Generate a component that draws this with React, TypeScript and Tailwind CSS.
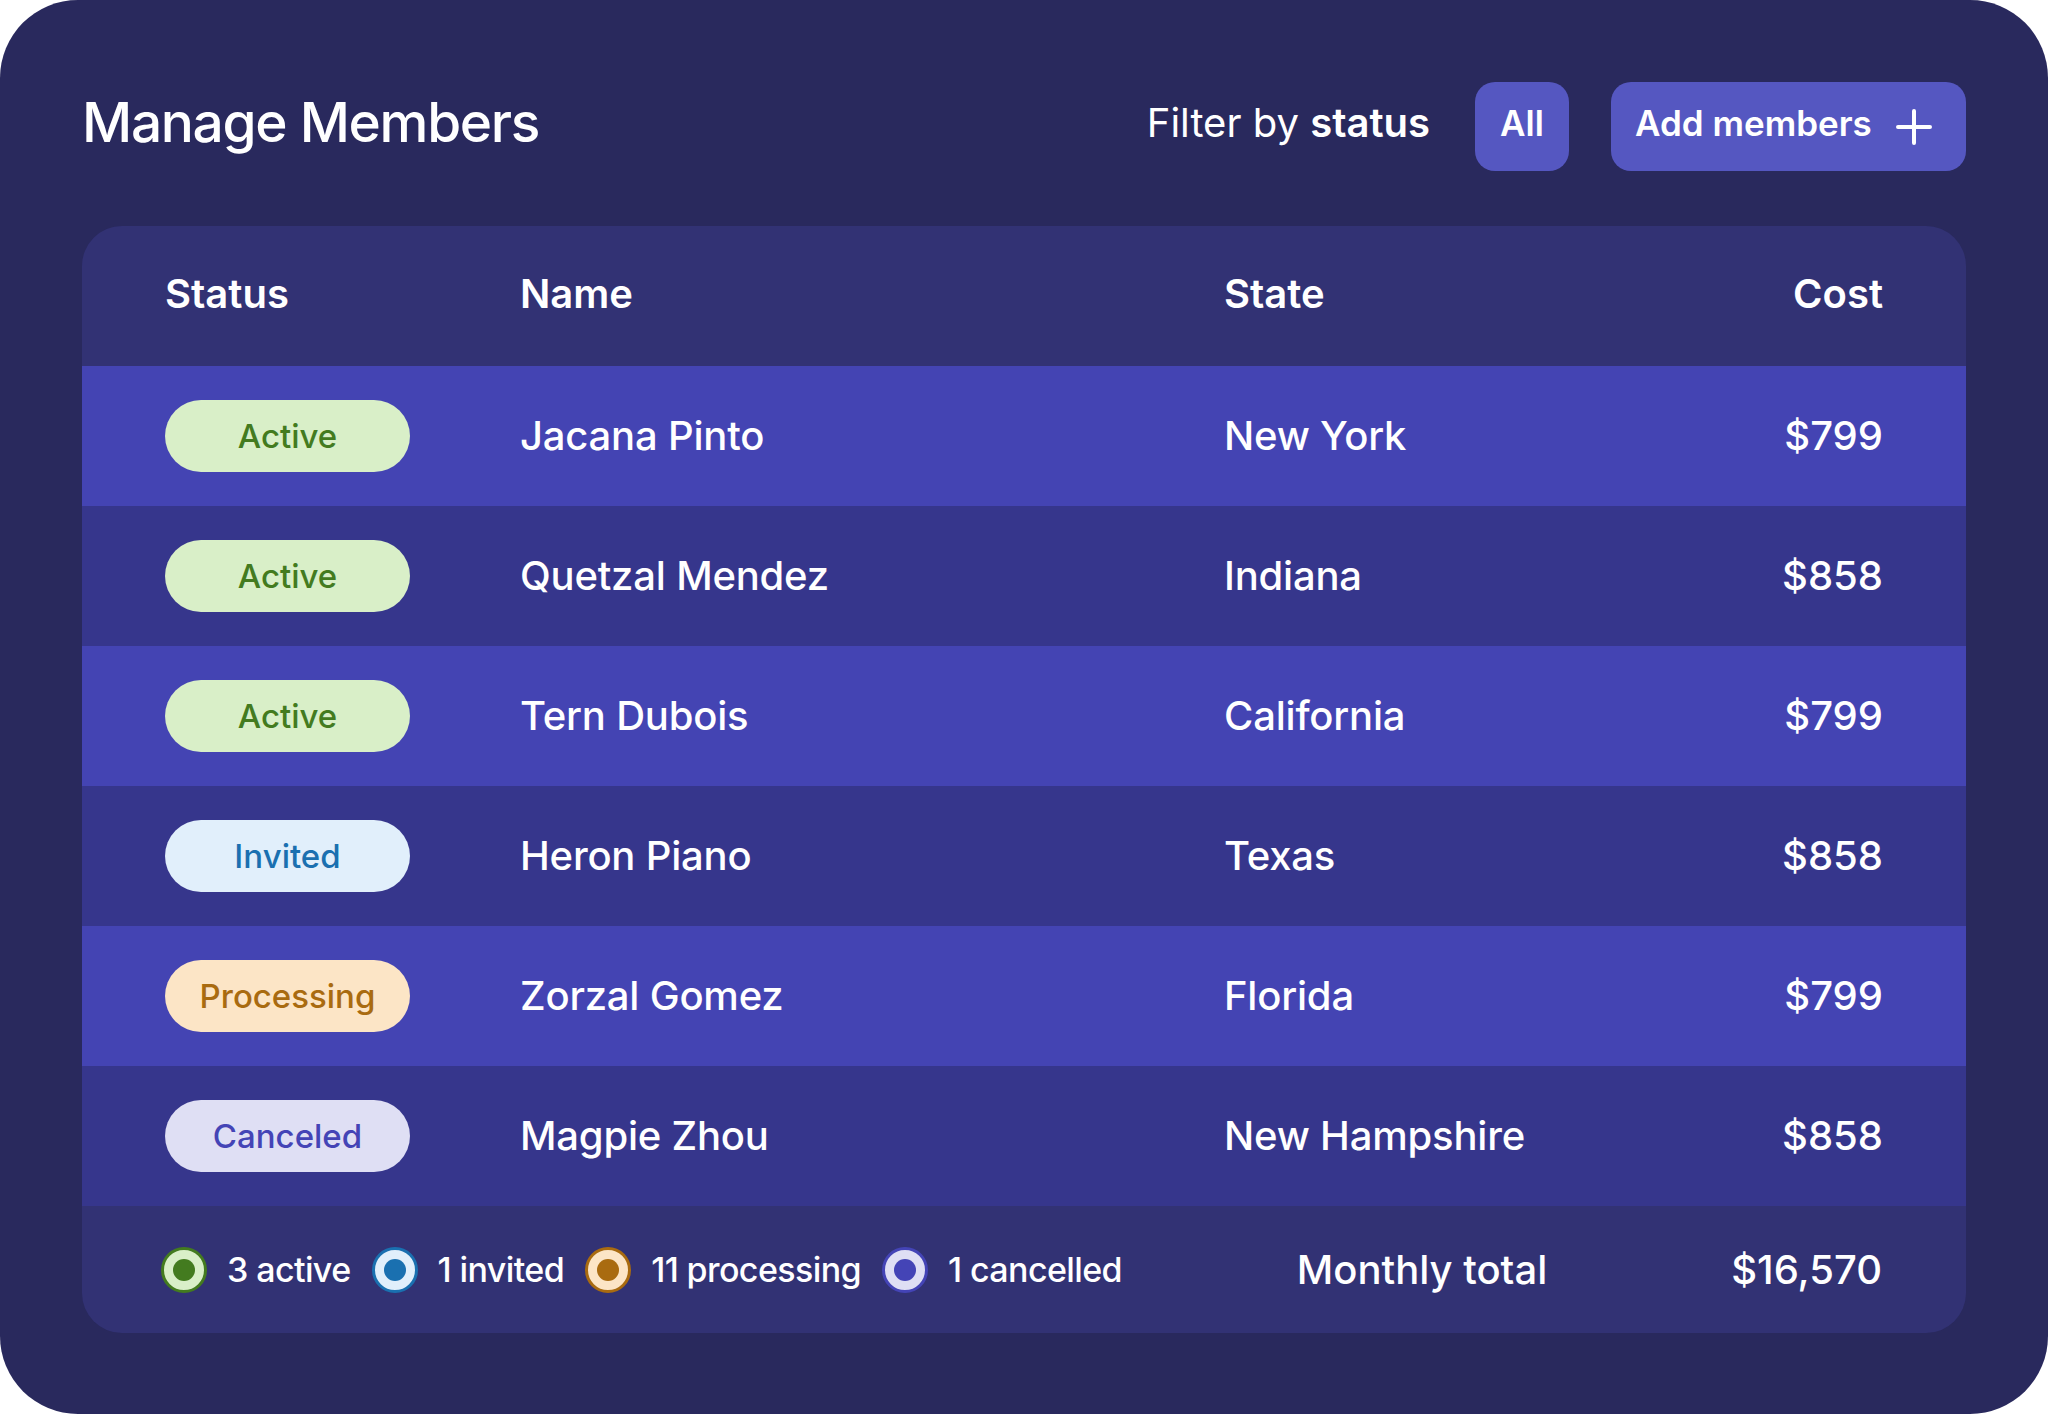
import React from 'react';

type Status = 'Active' | 'Invited' | 'Processing' | 'Canceled';

interface Member {
  status: Status;
  name: string;
  state: string;
  cost: string;
}

const members: Member[] = [
  { status: 'Active', name: 'Jacana Pinto', state: 'New York', cost: '$799' },
  { status: 'Active', name: 'Quetzal Mendez', state: 'Indiana', cost: '$858' },
  { status: 'Active', name: 'Tern Dubois', state: 'California', cost: '$799' },
  { status: 'Invited', name: 'Heron Piano', state: 'Texas', cost: '$858' },
  { status: 'Processing', name: 'Zorzal Gomez', state: 'Florida', cost: '$799' },
  { status: 'Canceled', name: 'Magpie Zhou', state: 'New Hampshire', cost: '$858' },
];

const badgeStyles: Record<Status, string> = {
  Active: 'bg-[#d9efc8] text-[#437b1f]',
  Invited: 'bg-[#e1effb] text-[#1a70b0]',
  Processing: 'bg-[#fce5c6] text-[#a96b10]',
  Canceled: 'bg-[#dfdff4] text-[#4444b6]',
};

const legend = [
  { label: '3 active', ring: 'border-[#437b1f] bg-[#d9efc8]', dot: 'bg-[#437b1f]' },
  { label: '1 invited', ring: 'border-[#1a70b0] bg-[#e1effb]', dot: 'bg-[#1a70b0]' },
  { label: '11 processing', ring: 'border-[#a96b10] bg-[#fce5c6]', dot: 'bg-[#a96b10]' },
  { label: '1 cancelled', ring: 'border-[#4444b6] bg-[#dfdff4]', dot: 'bg-[#4444b6]' },
];

const cols = 'grid grid-cols-[355px_704px_1fr_auto] items-center px-[83px]';

export default function App() {
  return (
    <div className="w-[2048px] h-[1418px] bg-white font-['Inter','Noto_Sans',sans-serif] text-white">
      <div className="h-[1414px] rounded-[78px] bg-[#29295d] px-[82px] pt-[82px]">

        {/* ── Header ─────────────────────────────────────────── */}
        <div className="flex h-[89px] items-center">
          <h1 className="mb-[9px] text-[55px] font-medium leading-none tracking-[-1.3px]">
            Manage Members
          </h1>
          <div className="ml-auto flex items-center">
            <p className="mb-[8px] text-[40px] leading-none">
              Filter by <span className="font-semibold">status</span>
            </p>
            <button className="ml-[45px] flex h-[89px] w-[94px] items-center justify-center rounded-[20px] bg-[#5557c1] pb-[6px] text-[35px] font-semibold leading-none">
              All
            </button>
            <button className="ml-[42px] flex h-[89px] w-[355px] items-center rounded-[20px] bg-[#5557c1] pl-[24px] text-[35px] font-semibold leading-none">
              <span className="pb-[6px]">Add members</span>
              <svg width="36" height="36" viewBox="0 0 36 36" className="ml-[24px]">
                <path d="M18 2v32M2 18h32" stroke="white" strokeWidth="4" strokeLinecap="round" />
              </svg>
            </button>
          </div>
        </div>

        {/* ── Table ──────────────────────────────────────────── */}
        <div className="mt-[55px] overflow-hidden rounded-[40px] bg-[#323274]">
          <div className={`${cols} h-[140px] pb-[4px] text-[40px] font-semibold leading-none`}>
            <span>Status</span>
            <span>Name</span>
            <span>State</span>
            <span className="text-right">Cost</span>
          </div>

          {members.map((m, i) => (
            <div
              key={m.name}
              className={`${cols} h-[140px] text-[40px] font-medium leading-none ${
                i % 2 === 0 ? 'bg-[#4444b3]' : 'bg-[#36368c]'
              }`}
            >
              <span
                className={`flex h-[72px] w-[245px] items-center justify-center rounded-full text-[33px] font-medium ${badgeStyles[m.status]}`}
              >
                {m.status}
              </span>
              <span className="tracking-[-0.2px]">{m.name}</span>
              <span className="tracking-[-0.2px]">{m.state}</span>
              <span className="text-right">{m.cost}</span>
            </div>
          ))}

          {/* ── Footer ───────────────────────────────────────── */}
          <div className="flex h-[127px] items-center pl-[79px] pr-[84px] font-medium leading-none">
            <div className="flex items-center gap-[21px]">
              {legend.map((l) => (
                <div key={l.label} className="flex items-center gap-[20px]">
                  <span className={`flex h-[46px] w-[46px] items-center justify-center rounded-full border-[3px] ${l.ring}`}>
                    <span className={`h-[22px] w-[22px] rounded-full ${l.dot}`} />
                  </span>
                  <span className="text-[34px] tracking-[-0.6px]">{l.label}</span>
                </div>
              ))}
            </div>
            <span className="ml-auto text-[40px]">Monthly total</span>
            <span className="ml-[184px] text-[40px]">$16,570</span>
          </div>
        </div>
      </div>
    </div>
  );
}
